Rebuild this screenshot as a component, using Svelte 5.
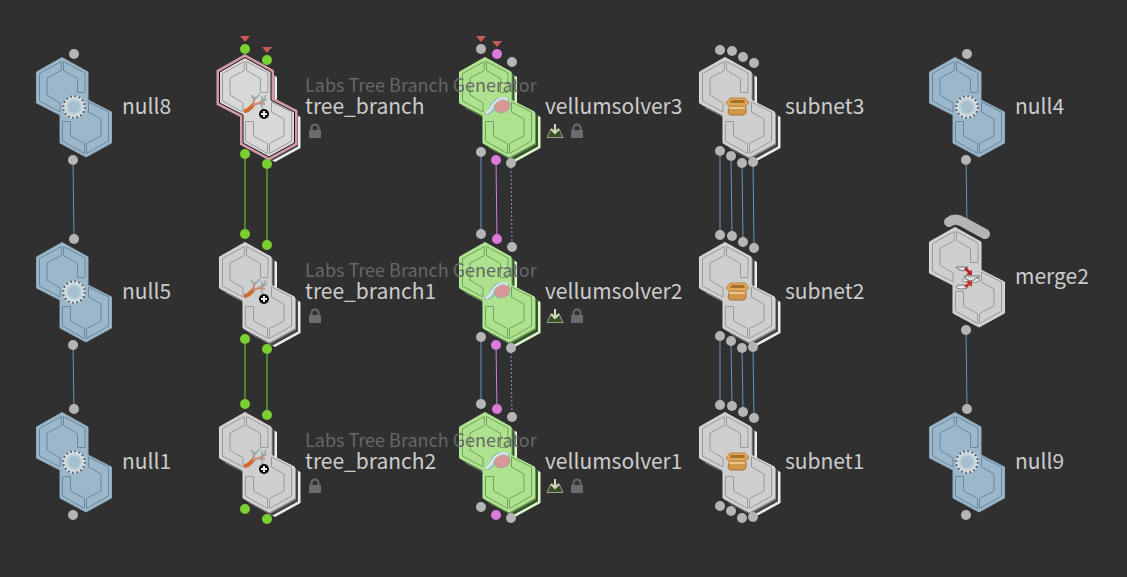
<script>
  const ports = {
    single: { ins: [[0, -53, 'grey']], outs: [[-1, 53, 'grey']] },
    tree: {
      ins: [[-12, -58, 'green'], [10, -47, 'green']],
      outs: [[-12, 47, 'green'], [10, 57, 'green']],
    },
    vellum: {
      ins: [[-16, -58, 'grey'], [0, -53, 'pink'], [15, -45, 'grey']],
      outs: [[-16, 45, 'grey'], [-1, 53, 'pink'], [14, 56, 'grey']],
    },
    subnet: {
      ins: [[-17, -57, 'grey'], [-5, -56, 'grey'], [6, -50, 'grey'], [17, -44, 'grey']],
      outs: [[-17, 44, 'grey'], [-6, 49, 'grey'], [5, 56, 'grey'], [16, 55, 'grey']],
    },
    merge: { ins: [[0, -55, 'none']], outs: [[-1, 53, 'grey']] },
  };

  const wireStyles = {
    single: ['blue'],
    merge: ['blue'],
    tree: ['green', 'green'],
    vellum: ['blue', 'pink', 'dotted'],
    subnet: ['blue', 'blue', 'blue', 'blue'],
  };

  const tag = 'Labs Tree Branch Generator';
  const nodes = [
    { name: 'null8', kind: 'null', port: 'single', x: 74, y: 107 },
    { name: 'null5', kind: 'null', port: 'single', x: 74, y: 292 },
    { name: 'null1', kind: 'null', port: 'single', x: 74, y: 462 },
    { name: 'tree_branch', kind: 'tree', port: 'tree', x: 257, y: 107, tag, lock: true, selected: true, flags: [0, 1] },
    { name: 'tree_branch1', kind: 'tree', port: 'tree', x: 257, y: 292, tag, lock: true },
    { name: 'tree_branch2', kind: 'tree', port: 'tree', x: 257, y: 462, tag, lock: true },
    { name: 'vellumsolver3', kind: 'vellum', port: 'vellum', x: 497, y: 107, lock: true, dive: true, flags: [0, 1] },
    { name: 'vellumsolver2', kind: 'vellum', port: 'vellum', x: 497, y: 292, lock: true, dive: true },
    { name: 'vellumsolver1', kind: 'vellum', port: 'vellum', x: 497, y: 462, lock: true, dive: true },
    { name: 'subnet3', kind: 'subnet', port: 'subnet', x: 737, y: 107 },
    { name: 'subnet2', kind: 'subnet', port: 'subnet', x: 737, y: 292 },
    { name: 'subnet1', kind: 'subnet', port: 'subnet', x: 737, y: 462 },
    { name: 'null4', kind: 'null', port: 'single', x: 967, y: 107 },
    { name: 'merge2', kind: 'merge', port: 'merge', x: 967, y: 277 },
    { name: 'null9', kind: 'null', port: 'single', x: 967, y: 462 },
  ];

  const wires = [];
  nodes.forEach((from, i) => {
    const to = nodes[i + 1];
    if (!to || to.x !== from.x) return;
    ports[from.port].outs.forEach(([ox, oy], k) => {
      const [ix, iy] = ports[to.port].ins[k];
      wires.push({
        x1: from.x + ox,
        y1: from.y + oy,
        x2: to.x + ix,
        y2: to.y + iy,
        style: wireStyles[from.port][k],
      });
    });
  });

  const body = 'M-12-49.5 14-35V-7L37.500 5V36L12 50-14 36V8L-37.500-4V-35Z';
  const panels =
    'M-12.700-45.500-34.500-33.500V-6L-14 5V-4L-27-12V-29L-12.700-36.500Z' +
    'M-10.500-45.500 11-34V-14.500H3.500V-28.500L-10.500-36.500Z' +
    'M14.500-5 34.500 5V34L12.500 46.500V36.500L27 29V12L14.500 5Z' +
    'M-11.500 14.500H-3.500V29L10.500 36.500V46.500L-11.500 34Z';
</script>

<main class="network">
  <svg class="wires" aria-hidden="true">
    {#each wires as w}
      <line class={w.style} x1={w.x1} y1={w.y1} x2={w.x2} y2={w.y2} />
    {/each}
  </svg>

  {#each nodes as n}
    <article class="node {n.kind}" class:selected={n.selected} style="left:{n.x - 48}px;top:{n.y - 72}px">
      <svg class="shape" viewBox="-48 -72 96 144" aria-hidden="true">
        {#if n.kind === 'tree' || n.kind === 'vellum' || n.kind === 'subnet'}
          <path class="stack-back" d={body} transform="translate(6 5)" />
          <path class="stack-gap" d={body} transform="translate(3.5 3.5)" />
          <path class="stack-mid" d={body} transform="translate(1.5 1.5)" />
        {/if}
        {#if n.selected}<path class="halo" d={body} />{/if}
        <path class="body" d={body} />
        <path class="panels" d={panels} />

        {#if n.kind === 'null'}
          <circle r="11.500" fill="#d3dce2" />
          <circle r="10.800" fill="none" stroke="#4c5963" stroke-width="2" stroke-dasharray="1.700 2.541" />
          <circle r="7" fill="#a5bfd1" stroke="#bdced9" stroke-width="2" />
        {:else if n.kind === 'tree'}
          <path d="M-13 4C-8 4-6 0-3-3" fill="none" stroke="#d2692c" stroke-width="4" />
          <path d="M-5-1C-2-3-4-7-2-10M-4-2C1-4 4-3 7-8M2-4 8-3" fill="none" stroke="#c78d77" stroke-width="2" />
          <path d="M-3-8-6-12M-2-8 3-13M5-6V-11M5-5 10-8M4-3 6 2M7-8 9-12" fill="none" stroke="#83aaa5" stroke-width="1.300" />
          <circle cx="7" cy="7" r="5" fill="#090909" />
          <path d="M7 4V10M4 7H10" stroke="#eee" stroke-width="2" />
        {:else if n.kind === 'vellum'}
          <path d="M-12 7C-8 5-7-3-2-7 2-10 9-10 12-7 4-9-1-4-2 1-4 5-8 8-12 7Z" fill="#b7dae1" stroke="#789fa9" />
          <ellipse cx="5" cy="-1" rx="8" ry="6.500" transform="rotate(-20 5 -1)" fill="#d99898" stroke="#a8a0a0" />
          <path d="M-11 7C-6 3-5-4 1-7 4-9 8-9 11-7" fill="none" stroke="#d3e9ec" stroke-width="2.500" />
        {:else if n.kind === 'subnet'}
          <path d="M-8 0H9V6L7 8H-7L-9 6Z" fill="#d0974a" stroke="#a87534" />
          <path d="M-7-9H8L12-4 8-1H-8L-11-4Z" fill="#dfa757" stroke="#b98440" />
          <path d="M-6-7H7L8-4H-7Z" fill="#a4712c" />
          <path d="M-8 1H8" stroke="#efc580" stroke-width="2" />
        {:else if n.kind === 'merge'}
          <path class="collector" d="M-18-55C-14-58-9-58-4-55L18-43" />
          <path d="M-11-10H1Q0-6-4-6-9-7-11-10Z" fill="#e4eae8" stroke="#697170" />
          <ellipse cx="-5" cy="10" rx="6" ry="2" fill="#e4eae8" stroke="#777" />
          <path d="M-3-8-1-10 3-6 5-7V-2H-1L1-4Z" fill="#b5252d" />
          <ellipse cx="4" cy="3" rx="9" ry="2.500" fill="#e6e9e6" stroke="#888" />
          <path d="M-3-1H13L11 1H9Q7 4 3 4-2 3-3-1Z" fill="#d5dfdd" stroke="#697170" />
          <path d="M-3 9 1 6-1 4H5V10L3 8-1 11Z" fill="#c2362a" />
        {/if}

        {#each [...ports[n.port].ins, ...ports[n.port].outs] as [px, py, colour]}
          <circle class="port {colour}" cx={px} cy={py} r="5" />
        {/each}
        {#each n.flags ?? [] as i}
          {@const p = ports[n.port].ins[i]}
          <path class="flag" d="M{p[0] - 5} {p[1] - 13}h10l-5 6z" />
        {/each}
      </svg>

      <div class="label">
        <span class="tag">{n.tag ?? ''}</span>
        <span class="name">{n.name}</span>
        <span class="badges">
          {#if n.dive}
            <svg viewBox="0 0 18 16" aria-hidden="true">
              <path d="M5 5 1 14.500H17L13 5Z" fill="#37502a" />
              <path d="M5 6 1 14.500H17L13 6" fill="none" stroke="#9aa287" />
              <path d="M9 1V9M5 6 9 10 13 6" fill="none" stroke="#d5d8bd" stroke-width="2" />
            </svg>
          {/if}
          {#if n.lock}
            <svg class="lock" viewBox="0 0 18 16" aria-hidden="true">
              <path d="M5.500 8V5a3.500 3.500 0 0 1 7 0V8" fill="none" stroke="#686c6c" stroke-width="2" />
              <path d="M3 7H15V15H3Z" fill="#686c6c" />
            </svg>
          {/if}
        </span>
      </div>
    </article>
  {/each}
</main>

<style>
  :global(body) {
    margin: 0;
    background: #303030;
  }
  .network {
    position: relative;
    min-height: 100vh;
    overflow: hidden;
    color: #cccccc;
    font-family: 'Noto Sans CJK SC', 'Noto Sans', sans-serif;
  }
  .wires {
    position: absolute;
    inset: 0;
    width: 100%;
    height: 100%;
  }
  .wires line { stroke-width: 1; }
  .wires .blue { stroke: #6793c2; }
  .wires .green { stroke: #74cc30; }
  .wires .pink { stroke: #d97bdc; }
  .wires .dotted { stroke: #7e98c4; stroke-dasharray: 2 2; }

  .node {
    --face: #cfcfcf;
    --edge: #dcdcdc;
    --seam: #9b9b9b;
    --back: #ededed;
    --gap: #444444;
    --mid: #929292;
    position: absolute;
    display: flex;
    align-items: flex-start;
  }
  .null { --face: #9db7ca; --edge: #8ba9bd; --seam: #6888a0; }
  .vellum { --face: #aee28f; --edge: #b5eb98; --seam: #72a35c; --back: #daf8c9; --gap: #38532d; --mid: #66934f; }
  .selected { --face: #d8d8d8; --edge: #181014; }

  .shape {
    width: 96px;
    height: 144px;
    flex: none;
    overflow: visible;
  }
  .body { fill: var(--face); stroke: var(--edge); stroke-width: 1; }
  .panels { fill: none; stroke: var(--seam); stroke-width: 1; }
  .stack-back { fill: var(--back); }
  .stack-gap { fill: var(--gap); }
  .stack-mid { fill: var(--mid); }
  .halo { fill: none; stroke: #d39ba4; stroke-width: 6; }
  .port.grey { fill: #b5b5b5; }
  .port.green { fill: #79d030; }
  .port.pink { fill: #d97bdc; }
  .port.none { fill: none; }
  .flag { fill: #ca5959; }
  .collector {
    fill: none;
    stroke: #b5b5b5;
    stroke-width: 10;
    stroke-linecap: round;
    stroke-linejoin: round;
  }

  .label {
    position: relative;
    z-index: 1;
    display: grid;
    grid-template-rows: 20px 22px 30px;
    padding-top: 39px;
    white-space: nowrap;
  }
  .tag { font-size: 18px; line-height: 20px; color: #676767; }
  .name { font-size: 21px; line-height: 22px; }
  .badges { display: flex; align-items: center; gap: 4px; padding-left: 1px; }
  .badges svg { width: 18px; height: 16px; }
</style>
